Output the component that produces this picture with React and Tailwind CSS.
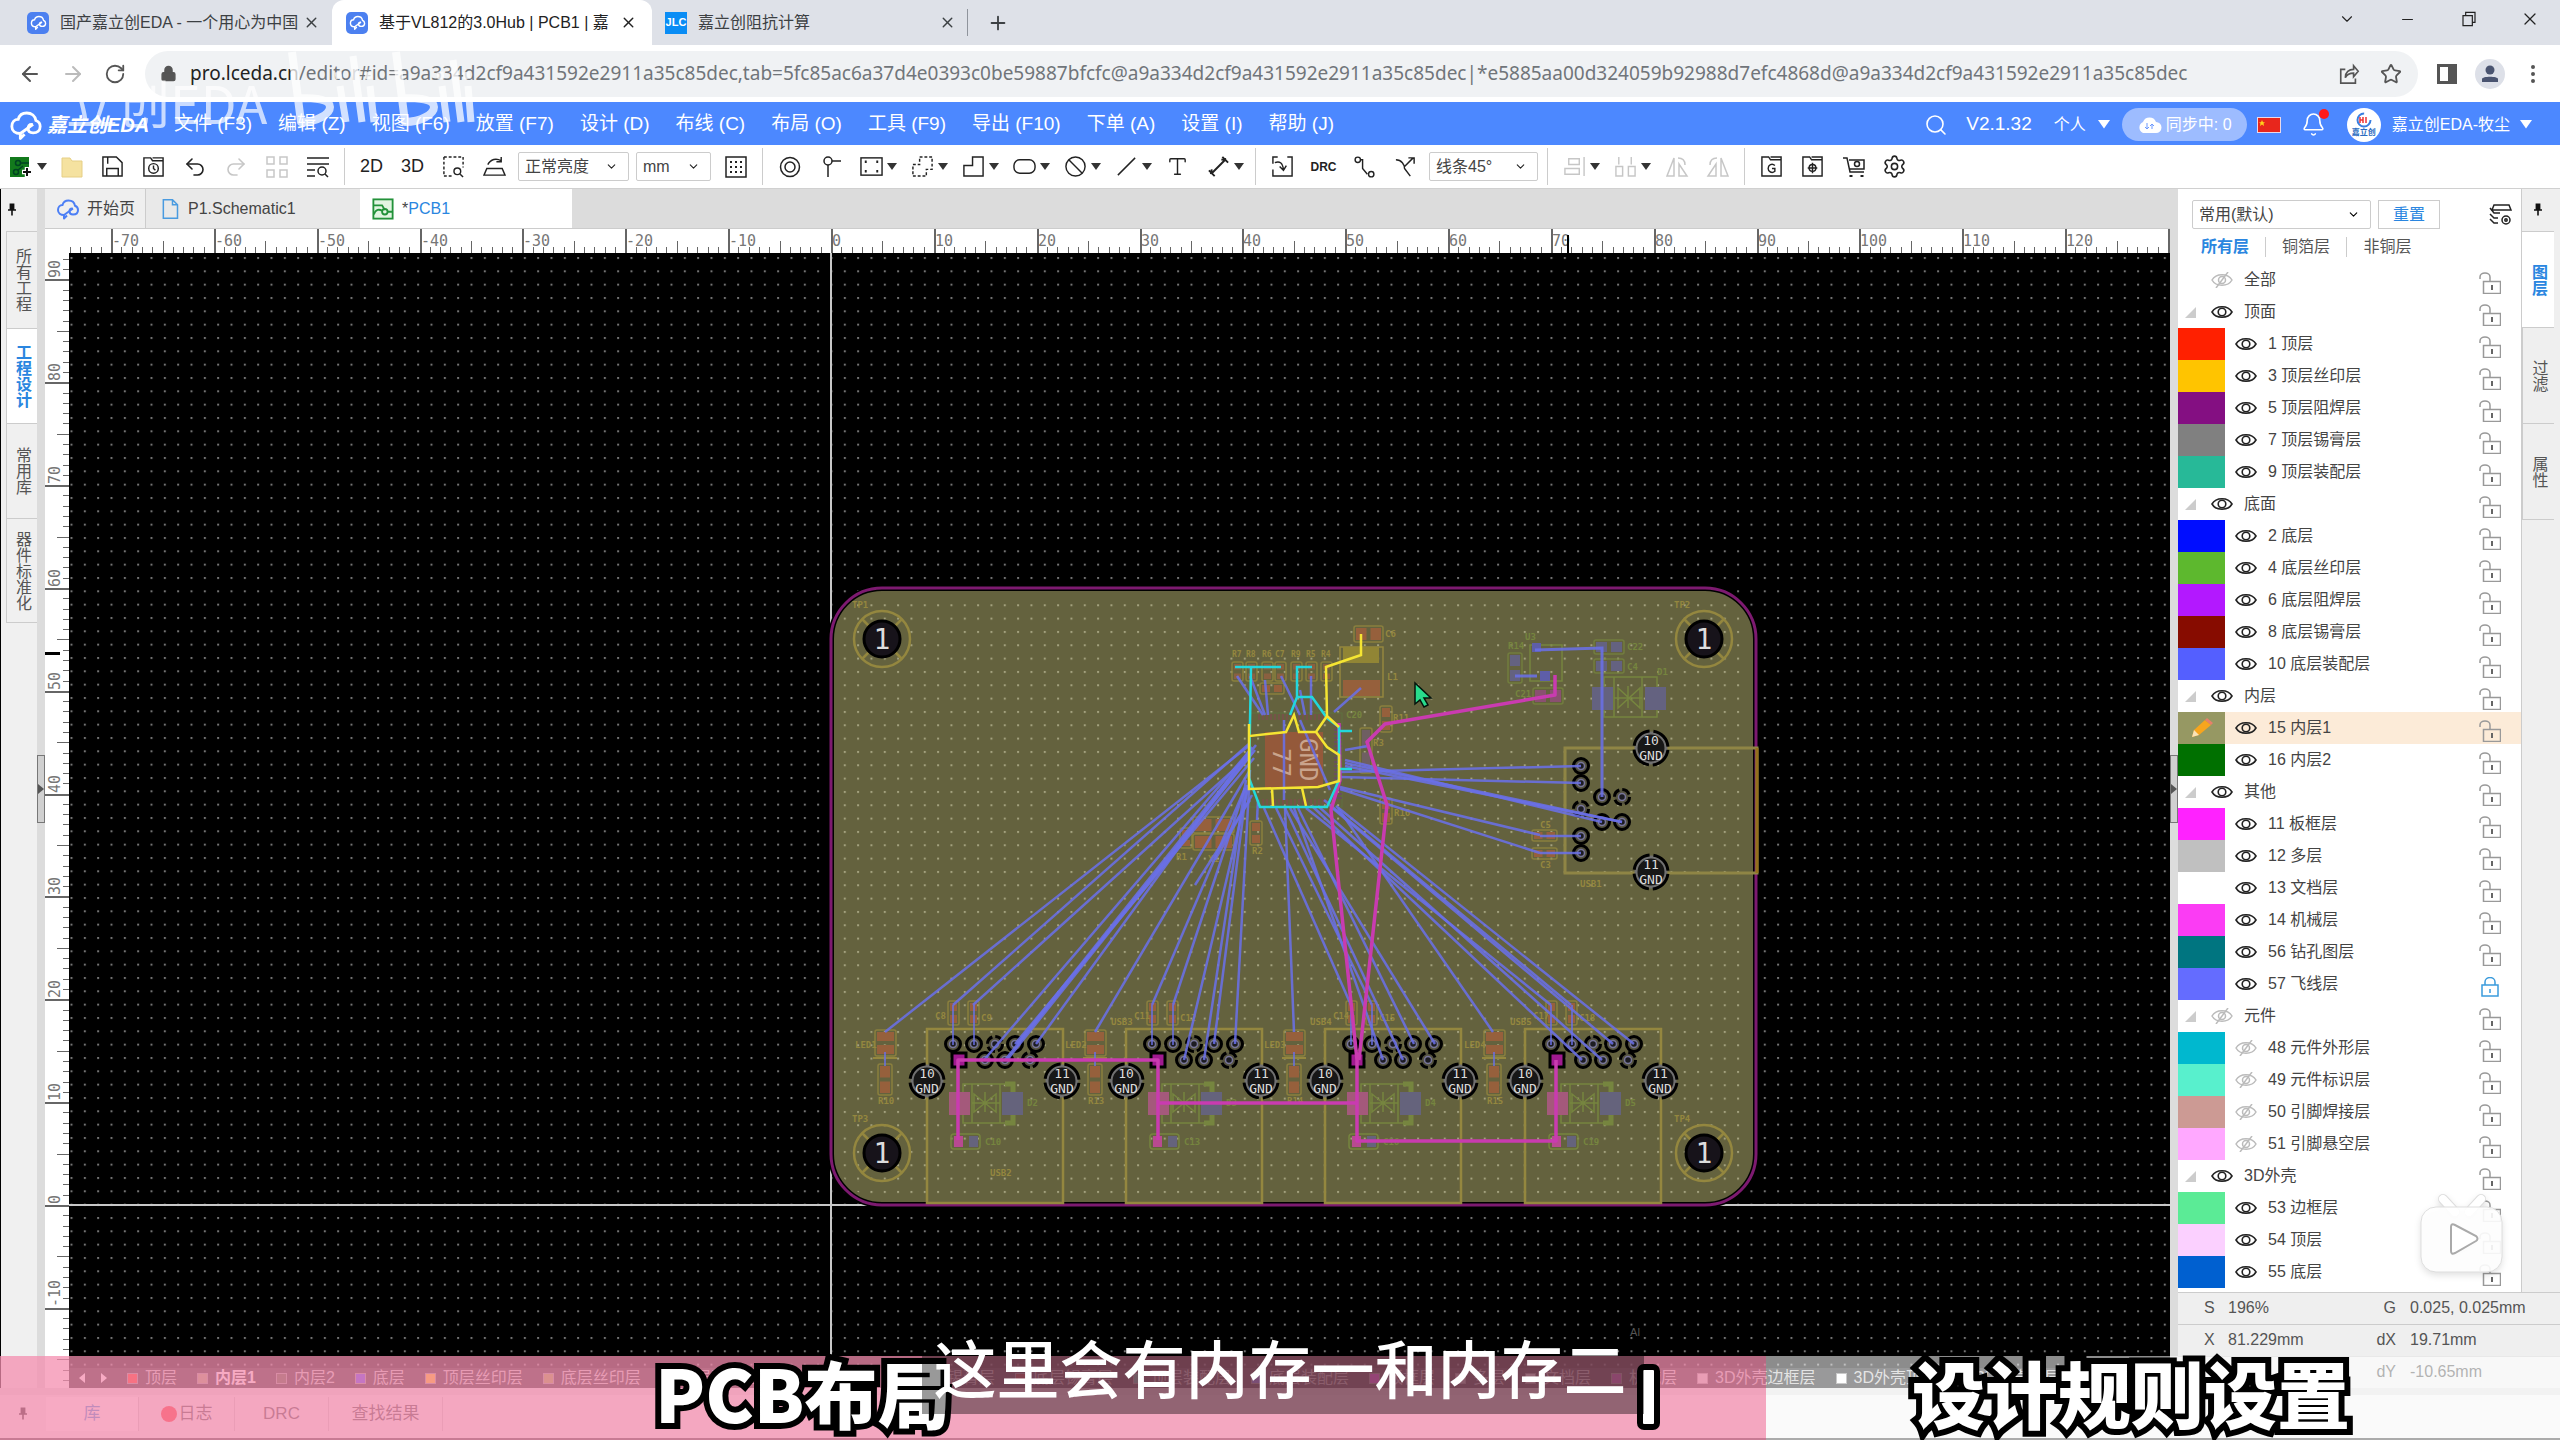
import React from "react";
import {
  ArrowLeft, ArrowRight, RotateCw, Lock, X, Plus, ChevronDown, Minus, Star,
  MoreVertical, Search, Bell, Undo2, Redo2, Settings, Type,
} from "lucide-react";

const CJK = "font-['Liberation_Sans','Noto_Sans_CJK_SC',sans-serif]";

function Ic({ children, size = 24, sw = 1.5, color = "#222", vb = "0 0 24 24" }) {
  return (
    <svg width={size} height={size} viewBox={vb} fill="none" stroke={color} strokeWidth={sw} className="shrink-0">
      {children}
    </svg>
  );
}

function CloudLogo({ size = 24, color = "#4c7ff5", sw = 2.4 }) {
  return (
    <Ic size={size} color={color} sw={sw}>
      <path d="M8 18c-3.500 0-6-2-6-5s2-5 4.500-5C7.300 5 9.500 3.500 12.500 3.500c3.500 0 6 2.300 6.500 5.300 2 .8 3 2.400 3 4.200 0 2.800-2 4.500-5 4.500-2 0-3.500-1-3.500-3s1-3 2.500-3" strokeLinecap="round" />
      <path d="M17 11.500 8 18v3.500l3-3" strokeLinejoin="round" />
    </Ic>
  );
}

/* ---------- browser chrome ---------- */

function Favicon() {
  return (
    <span className="flex h-[22px] w-[22px] shrink-0 items-center justify-center rounded-[5px] bg-[#4c80f0]">
      <CloudLogo size={17} color="#fff" sw={2} />
    </span>
  );
}

function BrowserTabs() {
  return (
    <div className={`flex h-[45px] shrink-0 items-stretch bg-[#dee1e8] text-[16px] text-[#3c4043] ${CJK}`}>
      <div className="flex w-[332px] items-center gap-[5px] pl-[27px]">
        <Favicon />
        <span className="ml-[6px] w-[238px] whitespace-nowrap">国产嘉立创EDA - 一个用心为中国</span>
        <button aria-label="关闭标签页"><X size={17} /></button>
      </div>
      <div className="flex w-[320px] items-center gap-[5px] rounded-t-[12px] bg-white pl-[14px] text-[#222]">
        <Favicon />
        <span className="ml-[6px] w-[236px] whitespace-nowrap">基于VL812的3.0Hub | PCB1 | 嘉</span>
        <button aria-label="关闭标签页"><X size={17} /></button>
      </div>
      <div className="my-[9px] flex w-[316px] items-center gap-[5px] border-r border-[#8f949c] pl-[13px]">
        <span className="flex h-[22px] w-[22px] shrink-0 items-center justify-center bg-[#0a8df5] text-[11px] font-bold text-white">JLC</span>
        <span className="ml-[6px] w-[236px] whitespace-nowrap">嘉立创阻抗计算</span>
        <button aria-label="关闭标签页"><X size={17} /></button>
      </div>
      <button aria-label="新标签页" className="px-[19px]"><Plus size={22} /></button>
      <div className="ml-auto flex items-center pb-[7px] text-[#222]">
        <button aria-label="展开" className="flex w-[61px] justify-center"><ChevronDown size={18} strokeWidth={1.5} /></button>
        <button aria-label="最小化" className="flex w-[61px] justify-center"><Minus size={17} strokeWidth={1.5} /></button>
        <button aria-label="还原" className="flex w-[61px] justify-center">
          <Ic size={16} sw={1.8}><path d="M3 7h14v15H3zM7 7V2h14v15h-4" /></Ic>
        </button>
        <button aria-label="关闭" className="flex w-[61px] justify-center"><X size={20} strokeWidth={1.5} /></button>
      </div>
    </div>
  );
}

function AddressBar() {
  return (
    <div className="flex h-[57px] shrink-0 items-center bg-white text-[#555]">
      <button aria-label="后退" className="ml-[18px]"><ArrowLeft size={24} /></button>
      <button aria-label="前进" className="ml-[19px] text-[#bbb]"><ArrowRight size={24} /></button>
      <button aria-label="刷新" className="ml-[19px]"><RotateCw size={22} /></button>
      <div className="ml-[19px] flex h-[46px] flex-1 items-center rounded-full bg-[#f0f2f4] pl-[15px] pr-[16px]">
        <Lock size={17} fill="#555" className="shrink-0" />
        <span className="ml-[13px] flex-1 whitespace-nowrap font-['Noto_Sans',sans-serif] text-[19px] text-[#70757a]">
          <span className="text-[#222]">pro.lceda.cn</span>/editor#id=a9a334d2cf9a431592e2911a35c85dec,tab=5fc85ac6a37d4e0393c0be59887bfcfc@a9a334d2cf9a431592e2911a35c85dec|*e5885aa00d324059b92988d7efc4868d@a9a334d2cf9a431592e2911a35c85dec
        </span>
        <button aria-label="分享">
          <Ic size={22} color="#555" sw={1.8}><path d="M8 7H3v15h16v-5M8 16c0-6 4-9 9-9V3l5 6-5 6v-4c-4 0-7 1-9 5z" /></Ic>
        </button>
        <button aria-label="收藏" className="ml-[20px]"><Star size={22} /></button>
      </div>
      <button aria-label="侧边栏" className="ml-[19px] h-[20px] w-[20px] border-[3px] border-r-[9px] border-[#555]" />
      <span className="ml-[18px] flex h-[30px] w-[30px] items-center justify-center rounded-full bg-[#dde0e8]">
        <svg width="18" height="18" viewBox="0 0 18 18" fill="#4a5470"><circle cx="9" cy="5" r="4.500" /><path d="M1 17v-3c0-3 16-3 16 0v3z" /></svg>
      </span>
      <button aria-label="菜单" className="ml-[16px] mr-[15px]"><MoreVertical size={24} /></button>
    </div>
  );
}

/* ---------- application header ---------- */

const MENUS = ["文件 (F3)", "编辑 (Z)", "视图 (F6)", "放置 (F7)", "设计 (D)", "布线 (C)", "布局 (O)", "工具 (F9)", "导出 (F10)", "下单 (A)", "设置 (I)", "帮助 (J)"];

function Caret({ color = "#333", w = 10 }) {
  return <svg width={w} height={w * 0.7} viewBox="0 0 10 7" className="shrink-0"><path d="M0 0h10L5 7z" fill={color} /></svg>;
}

function MenuBar() {
  return (
    <div className={`flex h-[43px] shrink-0 items-center bg-[#4c88ff] pt-[2px] text-white ${CJK}`}>
      <span className="ml-[9px]"><CloudLogo size={34} color="#fff" sw={2} /></span>
      <span className="ml-[4px] w-[110px] whitespace-nowrap text-[20px] font-bold italic">嘉立创EDA</span>
      <nav className="ml-[17px] flex gap-[26px] text-[19px]">
        {MENUS.map((m) => <button key={m} className="whitespace-nowrap">{m}</button>)}
      </nav>
      <div className="ml-auto flex items-center text-[16px]">
        <button aria-label="搜索"><Search size={24} strokeWidth={1.6} /></button>
        <span className="ml-[18px] text-[19px]">V2.1.32</span>
        <button className="ml-[22px] flex items-center gap-[12px]">个人 <Caret color="#fff" w={12} /></button>
        <span className="ml-[12px] flex h-[33px] w-[125px] items-center gap-[4px] whitespace-nowrap rounded-full bg-[#9dbcff] pl-[15px] text-[16px]">
          <svg width="25" height="20" viewBox="0 0 25 20"><path d="M6 18a6 6 0 0 1 0-11 7 7 0 0 1 13 0 5.500 5.500 0 0 1 0 11z" fill="#fff" /><path d="M10 8v6m-2-2 2 2 2-2M15 14V9m-2 2 2-2 2 2" stroke="#6b98ff" fill="none" /></svg>
          同步中: 0
        </span>
        <svg className="ml-[10px]" width="24" height="16" viewBox="0 0 24 16"><rect width="24" height="16" fill="#e8261c" stroke="#e9d9e9" strokeWidth="2" /><path d="m5 3 1 2.200h2L6.500 6.500 7 9 5 7.500 3 9l.5-2.500L2 5.200h2z" fill="#ffd21c" /></svg>
        <span className="relative ml-[20px]">
          <Bell size={25} strokeWidth={1.5} />
          <span className="absolute -top-[3px] right-[-3px] h-[10px] w-[10px] rounded-full bg-[#ff1a1a]" />
        </span>
        <span className="ml-[21px] flex h-[34px] w-[34px] flex-col items-center justify-center rounded-full bg-white">
          <svg width="22" height="16" viewBox="0 0 22 16" fill="none" strokeWidth="2"><circle cx="11" cy="8" r="6.500" stroke="#3a7fe0" strokeDasharray="30 11" /><path d="M7 5v6M10 5v6M7 8h3M13 5v6" stroke="#e33" strokeWidth="1.500" /></svg>
          <span className="text-[8px] font-bold leading-[9px] text-[#2b6cc0]">嘉立创</span>
        </span>
        <button className="ml-[11px] mr-[28px] flex items-center gap-[10px] whitespace-nowrap">嘉立创EDA-牧尘 <Caret color="#fff" w={12} /></button>
      </div>
    </div>
  );
}

/* ---------- toolbar ---------- */

function Tool({ label, children, dim }) {
  return <button aria-label={label} className={dim ? "flex w-[41px] justify-center opacity-25" : "flex w-[41px] justify-center"}>{children}</button>;
}
function ToolDrop({ label, children, dim }) {
  return (
    <button aria-label={label} className="flex w-[51px] items-center gap-[4px] pl-[9px]">
      <span className={dim ? "opacity-25" : ""}>{children}</span>
      <Caret />
    </button>
  );
}
const Sep = () => <span className="mx-[6px] h-[37px] w-px bg-[#ccc]" />;

function Pick({ label, value, className }) {
  return (
    <label className={`relative flex h-[29px] items-center rounded-[2px] border border-[#ccc] bg-white ${className}`}>
      <select aria-label={label} defaultValue={value} className="h-full w-full appearance-none bg-transparent pl-[6px] text-[16px] text-[#444] outline-none">
        <option>{value}</option>
      </select>
      <ChevronDown size={13} className="pointer-events-none absolute right-[10px]" />
    </label>
  );
}

function Toolbar() {
  return (
    <div className={`flex h-[44px] shrink-0 items-center border-b border-[#d0d0d0] bg-white text-[#222] ${CJK}`}>
      <ToolDrop label="新建">
        <svg width="24" height="22" viewBox="0 0 24 22"><rect x="1" y="1" width="19" height="20" fill="#127a1c" /><circle cx="9" cy="7" r="2.500" fill="none" stroke="#042" strokeWidth="1.500" /><circle cx="7" cy="16" r="2.500" fill="none" stroke="#042" strokeWidth="1.500" /><path d="M11 7h9M9 14l5-4" stroke="#042" strokeWidth="1.500" /><path d="M13 16h10M18 11v10" stroke="#fff" strokeWidth="4.500" /><path d="M14 16h8M18 12v8" stroke="#111" strokeWidth="2" /></svg>
      </ToolDrop>
      <Tool label="打开"><svg width="22" height="22" viewBox="0 0 22 22"><path d="M1 2h8l2 3h10v16H1z" fill="#f5e2a0" stroke="#e6cf85" /></svg></Tool>
      <Tool label="保存"><Ic size={23}><path d="M2 2h14l6 6v14H2zM6 22v-8h12v8M7 2v7" /></Ic></Tool>
      <Tool label="历史"><Ic size={23}><path d="M2 3h7l2 3h11v16H2zM11 3h11v3" /><circle cx="12" cy="14" r="5" /><path d="M12 11v3l2 2" /></Ic></Tool>
      <Tool label="撤销"><Undo2 size={24} strokeWidth={1.6} /></Tool>
      <Tool label="重做" dim><Redo2 size={24} strokeWidth={1.6} /></Tool>
      <Tool label="布局" dim><Ic size={24}><path d="M2 2h7v7H2zM15 2h7v7h-7zM2 15h7v7H2zM15 15h7v7h-7z" /></Ic></Tool>
      <Tool label="查找"><Ic size={24}><path d="M1 3h22M1 9h22M1 15h8M1 21h8" /><circle cx="16" cy="16" r="4" /><path d="m19 19 3 3" /></Ic></Tool>
      <Sep />
      <Tool label="2D"><span className="text-[18px]">2D</span></Tool>
      <Tool label="3D"><span className="text-[18px]">3D</span></Tool>
      <Tool label="区域查找"><Ic size={23}><path d="M2 2h20v11M2 2v20h9" strokeDasharray="3 2" /><circle cx="16" cy="17" r="3.500" /><path d="m19 20 3 3" /></Ic></Tool>
      <Tool label="翻转"><Ic size={23}><path d="M4 14h16l3 7H1zM5 10c3-6 9-7 14-4M19 2v5h-5" /></Ic></Tool>
      <Pick label="亮度" value="正常亮度" className="ml-[3px] w-[111px]" />
      <Pick label="单位" value="mm" className="ml-[7px] mr-[4px] w-[75px]" />
      <Tool label="网格"><Ic size={24}><rect x="2" y="2" width="20" height="20" /><path d="M6 7h13M6 12h13M6 17h13" strokeDasharray="2 3" strokeWidth="2" /></Ic></Tool>
      <Sep />
      <Tool label="焊盘"><Ic size={24}><circle cx="12" cy="12" r="9.500" /><circle cx="12" cy="12" r="5" /></Ic></Tool>
      <Tool label="过孔"><Ic size={24}><circle cx="9" cy="6" r="4" /><path d="M13 6h9M9 10v12" /></Ic></Tool>
      <ToolDrop label="器件"><Ic size={23}><rect x="1" y="3" width="22" height="18" /><path d="M5 7h2M17 7h2M5 17h2M17 17h2" strokeWidth="2.500" /></Ic></ToolDrop>
      <ToolDrop label="选区"><Ic size={23}><path d="M9 2h13v13h-6v7H2V10h7z" strokeDasharray="3 2" /></Ic></ToolDrop>
      <ToolDrop label="铺铜"><Ic size={23}><path d="M11 2h11v20H2V11h9z" /></Ic></ToolDrop>
      <ToolDrop label="挖槽"><Ic size={23}><rect x="1" y="5" width="22" height="14" rx="6" /></Ic></ToolDrop>
      <ToolDrop label="禁止区"><Ic size={23}><circle cx="12" cy="12" r="10" /><path d="m5 5 14 14" /></Ic></ToolDrop>
      <ToolDrop label="线条"><Ic size={23}><path d="M3 21 21 3" /></Ic></ToolDrop>
      <Tool label="文本"><Type size={23} strokeWidth={1.5} /></Tool>
      <ToolDrop label="尺寸"><Ic size={23}><path d="M5 19 19 5M2 16l6 6M16 2l6 6M4 20l1-5M20 4l-5 1" strokeWidth="2" /></Ic></ToolDrop>
      <Sep />
      <Tool label="导入"><Ic size={23}><path d="M2 9V2h5M17 2h5v20H2v-7M4 8c5-2 8 0 9 7M9 12l4 4 3-5" /></Ic></Tool>
      <Tool label="DRC"><span className="text-[12px] font-bold">DRC</span></Tool>
      <Tool label="布线"><Ic size={23}><circle cx="5" cy="5" r="2.800" /><circle cx="19" cy="20" r="2.800" /><path d="M8 5h2v9l5 6" /></Ic></Tool>
      <Tool label="推挤"><Ic size={23}><path d="M2 5c6 0 9 5 9 9l6 8M11 12l9-9M15 3h6v6" /></Ic></Tool>
      <Pick label="线条角度" value="线条45°" className="mx-[3px] w-[109px]" />
      <Sep />
      <ToolDrop label="对齐" dim><Ic size={23}><path d="M22 2v20M6 4h11v6H6zM2 14h15v6H2z" /></Ic></ToolDrop>
      <ToolDrop label="分布" dim><Ic size={23}><path d="M2 12h7v10H2zM15 12h7v10h-7zM5 2v8M18 2v8" /></Ic></ToolDrop>
      <Tool label="水平翻转" dim><Ic size={24}><path d="M9 3v18H2zM14 21h8l-8-12zM13 3c5 0 7 3 7 7" /></Ic></Tool>
      <Tool label="垂直翻转" dim><Ic size={24}><path d="M15 3v18h7zM10 21H2l8-12zM11 3C6 3 4 6 4 10" /></Ic></Tool>
      <Sep />
      <Tool label="Gerber"><Ic size={23}><path d="M2 2h7l2 3h11v17H2zM11 2h11v3" /><path d="M15.500 11c-3-3-7-.5-7 3s4 5.500 7 3v-3h-3" /></Ic></Tool>
      <Tool label="坐标文件"><Ic size={23}><path d="M2 2h7l2 3h11v17H2zM11 2h11v3" /><circle cx="12" cy="13.500" r="3.500" /><path d="M12 8v11M7 13.500h10" /></Ic></Tool>
      <Tool label="下单"><Ic size={24}><path d="M1 3h4l3 14h14M7 5h15v9H8" /><circle cx="15" cy="9" r="2.500" /><path d="M9 20v2M20 20v2" strokeWidth="3" /></Ic></Tool>
      <Tool label="设置"><Settings size={25} strokeWidth={1.5} /></Tool>
    </div>
  );
}

/* ---------- side docks ---------- */

function Pin() {
  return <svg width="8" height="14" viewBox="0 0 10 16" className="shrink-0"><path d="M2 0h6v7h2v2H0V7h2zM4 9h2v6H4z" fill="#111" /></svg>;
}

function VGutter({ arrow }) {
  return (
    <div className="flex w-[8px] shrink-0 items-center justify-center bg-[#dcdcdc]">
      <span className="flex h-[68px] w-[8px] items-center border border-[#777] bg-[#d0d0d0]">
        <svg width="6" height="10" viewBox="0 0 6 10"><path d={arrow} fill="#555" /></svg>
      </span>
    </div>
  );
}

const LEFT = [["所有工程", "h-[98px]"], ["工程设计", "h-[95px]"], ["常用库", "h-[95px]"], ["器件标准化", "h-[104px]"]];

function LeftDock() {
  return (
    <div className={`flex w-[37px] shrink-0 flex-col border-l border-black bg-[#f0f0f0] ${CJK}`}>
      <button aria-label="固定" className="flex h-[42px] items-center justify-center pr-[14px]"><Pin /></button>
      {LEFT.map(([t, h], i) => (
        <button
          key={t}
          className={`ml-[5px] flex items-center justify-center border-b border-l border-[#ccc] text-[16px] leading-[16px] [writing-mode:vertical-rl] ${h} ${i === 1 ? "bg-white font-bold text-[#2a86e0]" : "text-[#555]"} ${i === 0 ? "border-t" : ""}`}
        >
          {t}
        </button>
      ))}
    </div>
  );
}

const GROUPS = [
  ["全部", false, null, []],
  ["顶面", true, 1, [["1 顶层", "#ff2000"], ["3 顶层丝印层", "#ffc400"], ["5 顶层阻焊层", "#840f82"], ["7 顶层锡膏层", "#808080"], ["9 顶层装配层", "#27b998"]]],
  ["底面", true, 1, [["2 底层", "#000dff"], ["4 底层丝印层", "#5db82e"], ["6 底层阻焊层", "#b318ff"], ["8 底层锡膏层", "#870c00"], ["10 底层装配层", "#545fff"]]],
  ["内层", true, 1, [["15 内层1", "#969863"], ["16 内层2", "#007000"]]],
  ["其他", true, 1, [["11 板框层", "#ff22ff"], ["12 多层", "#c0c0c0"], ["13 文档层", "#ffffff"], ["14 机械层", "#fb3cf4"], ["56 钻孔图层", "#007580"], ["57 飞线层", "#646cff"]]],
  ["元件", false, 1, [["48 元件外形层", "#00b8cf"], ["49 元件标识层", "#58f0cd"], ["50 引脚焊接层", "#cc9a94"], ["51 引脚悬空层", "#ffa8ff"]]],
  ["3D外壳", true, 1, [["53 边框层", "#5beb96"], ["54 顶层", "#fbd0ff"], ["55 底层", "#0060d0"]]],
];

function Eye({ on }) {
  return on ? (
    <svg width="22" height="16" viewBox="0 0 22 16" fill="none" stroke="#222" strokeWidth="1.600"><path d="M1 8C5 1 17 1 21 8c-4 7-16 7-20 0z" /><circle cx="11" cy="8" r="3.800" /></svg>
  ) : (
    <svg width="22" height="16" viewBox="0 0 22 16" fill="none" stroke="#bbb" strokeWidth="1.500"><path d="M1 8C5 1 17 1 21 8c-4 7-16 7-20 0z" /><circle cx="11" cy="8" r="3.500" /><path d="M17 0 5 16" /></svg>
  );
}

function LockIcon({ locked }) {
  return locked ? (
    <svg width="18" height="20" viewBox="0 0 18 20" fill="none" stroke="#3a9bdc" strokeWidth="1.500"><rect x="1" y="8" width="16" height="11" /><path d="M4 8V5a5 4.500 0 0 1 10 0v3M9 12v4" /></svg>
  ) : (
    <svg width="22" height="22" viewBox="0 0 22 22" fill="none" stroke="#999" strokeWidth="1.500"><rect x="4.500" y="9.500" width="17" height="12" /><path d="M1 7V5a5 4 0 0 1 10 0v4" /><path d="M13 13v5" stroke="#666" strokeWidth="2" /></svg>
  );
}

function LockCell({ locked }) {
  return <button aria-label="锁定" className="ml-auto mr-[20px] flex w-[22px] justify-center pt-[5px]"><LockIcon locked={locked} /></button>;
}

function LayerPanel() {
  return (
    <div className="flex min-w-0 flex-1 flex-col border-r border-[#ccc] bg-white">
      <div className="flex h-[45px] items-end pl-[14px]">
        <Pick label="预设" value="常用(默认)" className="mb-[5px] w-[179px]" />
        <button className="mb-[5px] ml-[7px] h-[29px] w-[62px] border border-[#ccc] text-[16px] text-[#2a86e0]">重置</button>
        <button aria-label="图层管理" className="mb-[7px] ml-auto mr-[9px]">
          <Ic size={24}><path d="M6 2h15l2 5H4zM2 5l4 5h6M2 11l4 4h4M2 16l4 4h4" /><circle cx="18" cy="17" r="4" /><circle cx="18" cy="17" r="1.200" /></Ic>
        </button>
      </div>
      <div className="mb-[4px] flex h-[26px] items-center pl-[7px] text-[16px] text-[#555]">
        <button className="w-[81px] border-r border-[#ccc] font-bold leading-[20px] text-[#2a86e0]">所有层</button>
        <button className="w-[81px] border-r border-[#ccc] leading-[20px]">铜箔层</button>
        <button className="w-[81px] leading-[20px]">非铜层</button>
      </div>
      <ul className="text-[16px] text-[#444]">
        {GROUPS.map(([name, on, tri, kids]) => (
          <React.Fragment key={name}>
            <li className="flex h-[32px] items-center">
              <span className="ml-[7px] w-[11px]">{tri && <svg width="11" height="11" viewBox="0 0 11 11"><path d="M11 0v11H0z" fill="#ccc" /></svg>}</span>
              <button aria-label="显示" className="ml-[15px]"><Eye on={on} /></button>
              <span className="ml-[11px]">{name}</span>
              <LockCell />
            </li>
            {kids.map(([k, c]) => (
              <li key={k} className={`flex h-[32px] items-center ${k === "15 内层1" ? "bg-[#fcebd8]" : ""}`}>
                <span className="flex h-full w-[47px] items-center justify-center" style={{ background: c }}>
                  {k === "15 内层1" && (
                    <svg width="22" height="20" viewBox="0 0 22 20"><path d="m1 19 2-7L14 2l6 5L8 17z" fill="#f7a51e" /><path d="m14 2 2-2 6 5-2 2z" fill="#e8806a" /><path d="m1 19 2-7 5 5z" fill="#fbe3b8" /></svg>
                  )}
                </span>
                <button aria-label="显示" className="ml-[10px]"><Eye on={on} /></button>
                <span className="ml-[11px]">{k}</span>
                <LockCell locked={k === "57 飞线层"} />
              </li>
            ))}
          </React.Fragment>
        ))}
      </ul>
    </div>
  );
}

function StatusRow({ a, b, c, d }) {
  return (
    <div className="flex h-[32px] items-center border-t border-[#ccc] pb-[2px] text-[16px] text-[#555]">
      <span className="w-[50px] pl-[26px]">{a}</span>
      <span className="w-[139px]">{b}</span>
      <span className="w-[29px] text-right">{c}</span>
      <span className="pl-[14px]">{d}</span>
    </div>
  );
}

function RightDock() {
  return (
    <div className={`flex w-[382px] shrink-0 flex-col bg-[#efefef] ${CJK}`}>
      <div className="flex min-h-0 flex-1">
        <LayerPanel />
        <div className="flex w-[38px] flex-col pr-[6px]">
          <button aria-label="固定" className="flex h-[43px] items-center justify-center border-b border-[#ccc]"><Pin /></button>
          {["图层", "过滤", "属性"].map((t, i) => (
            <button
              key={t}
              className={`flex h-[96px] items-center justify-center border-b border-l border-[#ccc] text-[16px] leading-[16px] [writing-mode:vertical-rl] ${i === 0 ? "-ml-px bg-white font-bold text-[#2a86e0]" : "text-[#555]"}`}
            >
              {t}
            </button>
          ))}
        </div>
      </div>
      <StatusRow a="S" b="196%" c="G" d="0.025, 0.025mm" />
      <StatusRow a="X" b="81.229mm" c="dX" d="19.71mm" />
      <StatusRow a="" b="" c="dY" d="-10.65mm" />
    </div>
  );
}

/* ---------- rulers ---------- */

const MM = 10.284;

function TopRuler() {
  const ticks = [];
  for (let i = -74; i <= 130; i++) {
    const x = Math.round(786 + i * MM);
    const h = i % 10 === 0 ? 24 : i % 5 === 0 ? 12 : 6;
    ticks.push(<rect key={i} x={x} y={24 - h} width={i % 10 === 0 ? 2 : 1} height={h} fill="#666" />);
    if (i % 10 === 0 && i < 130) ticks.push(<text key={`t${i}`} x={x + 1} y={17} fontSize="15" fill="#777">{i}</text>);
  }
  return (
    <svg className="block h-[24px] w-full bg-white font-['DejaVu_Sans_Mono',monospace]">
      {ticks}
      <rect x="1522" y="6" width="2" height="18" fill="#000" />
    </svg>
  );
}

function LeftRuler() {
  const ticks = [];
  for (let i = -17; i <= 92; i++) {
    const y = Math.round(952 - i * MM);
    const w = i % 10 === 0 ? 24 : i % 5 === 0 ? 12 : 6;
    ticks.push(<rect key={i} x={24 - w} y={y} width={w} height={i % 10 === 0 ? 2 : 1} fill="#666" />);
    if (i % 10 === 0) ticks.push(<text key={`t${i}`} transform={`translate(15 ${y - 1}) rotate(-90)`} fontSize="15" fill="#777">{i}</text>);
  }
  return (
    <svg className="block h-full w-[24px] shrink-0 bg-white font-['DejaVu_Sans_Mono',monospace]">
      {ticks}
      <rect x="0" y="399" width="15" height="3" fill="#000" />
    </svg>
  );
}

/* ---------- PCB canvas ---------- */

const GOLD = "#94873f";
const LEAF = "#76853f";
const RAT = "#6a70e6";
const MAG = "#c93bb0";
const ORANGE = "#96603c";

function Hole({ x, y, label }) {
  return (
    <g>
      <circle cx={x} cy={y} r="28" fill="none" stroke={GOLD} strokeWidth="2.500" />
      <path d={`M${x - 20} ${y - 20}l8 8M${x + 20} ${y - 20}l-8 8M${x - 20} ${y + 20}l8-8M${x + 20} ${y + 20}l-8-8`} stroke={GOLD} strokeWidth="2.500" />
      <circle cx={x} cy={y} r="18" fill="#17131a" stroke="#000" strokeWidth="3" />
      <text x={x} y={y + 10} fontSize="28" textAnchor="middle" fill="#ddd">1</text>
      <text x={x - 30} y={y - 31} fontSize="9" fontWeight="bold" fill={GOLD}>{label}</text>
    </g>
  );
}

function Gnd({ x, y, n }) {
  return (
    <g fontWeight="normal" fontSize="13" textAnchor="middle">
      <circle cx={x} cy={y} r="15" fill="#171717" stroke="#707070" strokeWidth="3" />
      <circle cx={x} cy={y} r="17" fill="none" stroke="#000" strokeWidth="3" strokeDasharray="22.700 4" strokeDashoffset="-2" />
      <text x={x} y={y - 3} fill="#ddd">{n}</text>
      <text x={x} y={y + 12} fill="#ddd">GND</text>
    </g>
  );
}

function Pad({ x, y, dashed }) {
  return (
    <g>
      <circle cx={x} cy={y} r="7.500" fill="#54523f" stroke="#000" strokeWidth="3" strokeDasharray={dashed ? "8.800 3" : undefined} />
      <circle cx={x} cy={y} r="3.500" fill="#1c1c22" stroke="#77759a" strokeWidth="1.500" />
    </g>
  );
}

function Chip({ x, y, w, h, c = ORANGE, o = GOLD, v }) {
  const a = v
    ? [[x + 2, y + 2, w - 4, h / 2 - 4], [x + 2, y + h / 2 + 2, w - 4, h / 2 - 4]]
    : [[x + 2, y + 2, w / 2 - 4, h - 4], [x + w / 2 + 2, y + 2, w / 2 - 4, h - 4]];
  return (
    <g>
      <rect x={x} y={y} width={w} height={h} rx="2" fill="none" stroke={o} strokeWidth="1.500" strokeOpacity=".8" />
      {a.map((r, i) => <rect key={i} x={r[0]} y={r[1]} width={r[2]} height={r[3]} fill={c} />)}
    </g>
  );
}

function Usb({ x, first, name, led, pads }) {
  const l = first ? -42 : -31;
  return (
    <g>
      <rect x={x} y="1029" width="136" height="174" fill="none" stroke={GOLD} strokeWidth="2.500" />
      <Chip x={x + 21} y={1001} w={11} h={24} v />
      <Chip x={x + 41} y={1001} w={11} h={24} v />
      <text x={x + 8} y={1019} fill={GOLD}>{pads[0]}</text>
      <text x={x + 54} y={1021} fill={GOLD}>{pads[1]}</text>
      <Chip x={x + l - 10} y={1030} w={21} h={26} v />
      <path d={`M${x + l - 12} 1058h24`} stroke={GOLD} strokeWidth="2" />
      <Chip x={x + l - 7} y={1064} w={14} h={31} v />
      <text x={x + l - 30} y={1048} fill={GOLD}>{led}</text>
      <text x={x + l - 7} y={1104} fill={GOLD}>{pads[2]}</text>
      <path d={`M${x + l} 1052v14`} stroke={RAT} strokeWidth="1.500" />
      <rect x={x + 36} y="1084" width="50" height="39" fill="none" stroke={LEAF} strokeWidth="1.500" />
      <path d={`M${x + 45} 1084v39M${x + 73} 1084v39M${x + 47} 1094v18l22-18v18zM${x + 45} 1103h28M${x + 58} 1092v20`} fill="none" stroke={LEAF} strokeWidth="1.500" />
      <path d={`M${x + 78} 1084h8v10M${x + 78} 1123h8v-8`} stroke={LEAF} strokeWidth="5" fill="none" />
      <rect x={x + 22} y="1092" width="21" height="23" fill="#a4597b" />
      <rect x={x + 75} y="1092" width="21" height="23" fill="#65637c" />
      <rect x={x + 24} y="1134" width="29" height="15" rx="3" fill="none" stroke={LEAF} strokeWidth="1.500" />
      <rect x={x + 27} y="1136" width="9" height="11" fill="#b84a90" />
      <rect x={x + 42} y="1136" width="9" height="11" fill="#65637c" />
      <text x={x + 100} y={1106} fill={LEAF}>{pads[3]}</text>
      <text x={x + 58} y={1145} fill={LEAF}>{pads[4]}</text>
      <text x={first ? x + 63 : x - 15} y={first ? 1176 : 1025} fill={GOLD}>{name}</text>
      {[26, 47, 68, 88, 109].map((d, i) => <Pad key={d} x={x + d} y={1044} dashed={i === 2} />)}
      {[58, 78, 103].map((d, i) => <Pad key={d} x={x + d} y={1060} dashed={i === 2} />)}
      <path d={`M${x + 26} 1005v40M${x + 47} 1005v40`} stroke={RAT} strokeWidth="1.500" />
      <rect x={x + 25} y="1053" width="14" height="14" fill="#a01a90" stroke="#000" strokeWidth="3" />
      <Gnd x={x} y={1081} n="10" />
      <Gnd x={x + 135} y={1081} n="11" />
    </g>
  );
}

const RATS = [
  [1250, 745, 885, 1032], [1250, 743, 953, 1005], [1250, 755, 973, 1005], [1252, 748, 984, 1060], [1253, 752, 1005, 1060],
  [1255, 750, 1007, 1060], [1254, 758, 1015, 1044], [1256, 745, 1017, 1044], [1252, 747, 1036, 1044], [1250, 770, 1095, 1032],
  [1245, 788, 1152, 1005], [1245, 788, 1173, 1005], [1250, 780, 1184, 1060], [1246, 780, 1204, 1060], [1247, 785, 1214, 1044],
  [1250, 770, 1235, 1044], [1285, 808, 1294, 1032], [1264, 808, 1351, 1005], [1276, 808, 1372, 1005], [1294, 808, 1383, 1060],
  [1285, 808, 1403, 1060], [1298, 808, 1414, 1044], [1290, 808, 1435, 1044], [1338, 808, 1493, 1032], [1306, 808, 1551, 1005],
  [1312, 806, 1582, 1060], [1318, 806, 1602, 1060], [1324, 800, 1571, 1005], [1330, 806, 1613, 1044], [1336, 806, 1634, 1044],
  [1340, 772, 1581, 766], [1340, 777, 1581, 783], [1345, 760, 1602, 822], [1345, 763, 1622, 822], [1345, 766, 1622, 822],
  [1340, 787, 1540, 835], [1340, 789, 1540, 853], [1540, 836, 1581, 836], [1540, 853, 1581, 853], [1345, 750, 1368, 746],
  [1237, 676, 1263, 715], [1250, 676, 1265, 715], [1265, 680, 1268, 715], [1281, 676, 1300, 715], [1300, 690, 1305, 715], [1311, 676, 1311, 715],
  [1361, 688, 1334, 712], [1284, 720, 1284, 800], [1300, 720, 1330, 790], [1250, 800, 1195, 885], [1252, 795, 1215, 860], [1258, 800, 1257, 820],
];

function Board() {
  return (
    <g transform="translate(-69 -253)">
      <rect x="831" y="588" width="925" height="617" rx="51" fill="#64623e" stroke="#000" strokeWidth="6" />
      <rect x="831" y="588" width="925" height="617" rx="51" fill="none" stroke="#7d1a70" strokeWidth="3" />
      <rect x="837" y="594" width="913" height="605" rx="45" fill="url(#boardDots)" />

      <g fontSize="9" fontWeight="bold">
        <rect x="1565" y="748" width="192" height="125" fill="none" stroke="#8f8545" strokeWidth="3" />
        <path d="M1757 748v125" stroke="#94701c" strokeWidth="3" />
        <Usb x={927} first name="USB2" led="LED1" pads={["C8", "C9", "R10", "D2", "C10"]} />
        <Usb x={1126} name="USB3" led="LED2" pads={["C11", "C12", "R13", "D3", "C13"]} />
        <Usb x={1325} name="USB4" led="LED3" pads={["C14", "C15", "R14", "D4", "C16"]} />
        <Usb x={1525} name="USB5" led="LED4" pads={["C17", "C18", "R15", "D5", "C19"]} />

        {[1232, 1246, 1262, 1275, 1291, 1306, 1321].map((x, i) => (
          <g key={x}>
            <Chip x={x} y={662} w={11} h={19} v c="#8a6040" />
            <text x={x} y={657} fontSize="8" fill={GOLD}>{["R7", "R8", "R6", "C7", "R9", "R5", "R4"][i]}</text>
          </g>
        ))}
        <Chip x={1260} y={683} w={24} h={11} />
        <Chip x={1354} y={626} w={29} h={16} />
        <text x="1385" y="637" fill={GOLD}>C6</text>
        <rect x="1340" y="647" width="43" height="50" fill="none" stroke={GOLD} strokeWidth="1.500" />
        <rect x="1343" y="647" width="36" height="16" fill="#918535" />
        <rect x="1343" y="680" width="37" height="16" fill={ORANGE} />
        <text x="1387" y="680" fill={GOLD}>L1</text>
        <Chip x={1380} y={706} w={12} h={26} v />
        <text x="1393" y="721" fill={GOLD}>R11</text>
        <Chip x={1360} y={728} w={12} h={45} v c="#6f5f62" />
        <text x="1373" y="746" fill={GOLD}>R3</text>
        <text x="1346" y="718" fill={LEAF}>C20</text>
        <Chip x={1380} y={798} w={12} h={26} v />
        <text x="1394" y="816" fill={GOLD}>R16</text>
        <Chip x={1193} y={817} w={41} h={16} />
        <Chip x={1193} y={834} w={41} h={16} />
        <Chip x={1250} y={821} w={12} h={24} v />
        <text x="1208" y="862" fill={GOLD}>X1</text>
        <text x="1176" y="860" fill={GOLD}>R1</text>
        <text x="1252" y="854" fill={GOLD}>R2</text>
        <Chip x={1180} y={828} w={12} h={20} v />
        <rect x="1250" y="713" width="92" height="94" fill="none" stroke="#5f7040" strokeWidth="1" />
        <path d="M1258 717h72M1258 802h72" stroke="#755448" strokeWidth="6" strokeDasharray="2 2" />
        <path d="M1338 725v75" stroke="#684f5c" strokeWidth="8" strokeDasharray="2 2" />

        <Chip x={1508} y={653} w={14} h={30} v c="#646280" o={LEAF} />
        <rect x="1530" y="645" width="32" height="36" fill="none" stroke={LEAF} strokeWidth="1.500" />
        <rect x="1532" y="643" width="9" height="9" fill="#5e5ea8" />
        <rect x="1540" y="671" width="10" height="10" fill="#5e5ea8" />
        <Chip x={1533} y={688} w={30} h={16} c="#8a5070" o={LEAF} />
        <Chip x={1594} y={640} w={30} h={14} c="#646280" o={LEAF} />
        <Chip x={1594} y={659} w={30} h={14} c="#646280" o={LEAF} />
        <rect x="1604" y="677" width="53" height="40" fill="none" stroke={LEAF} strokeWidth="1.500" />
        <path d="M1614 677v40M1642 677v40M1618 688v20l22-20v20zM1614 698h28M1628 686v22" fill="none" stroke={LEAF} strokeWidth="1.500" />
        <rect x="1592" y="687" width="21" height="23" fill="#646280" />
        <rect x="1645" y="687" width="21" height="23" fill="#646280" />
        <text x="1508" y="649" fill={LEAF}>R14</text>
        <text x="1525" y="640" fill={LEAF}>U3</text>
        <text x="1515" y="697" fill={LEAF}>C21</text>
        <text x="1627" y="650" fill={LEAF}>C22</text>
        <text x="1627" y="670" fill={LEAF}>C4</text>
        <text x="1657" y="675" fill={LEAF}>D1</text>
        <Chip x={1532} y={830} w={25} h={11} />
        <Chip x={1532} y={848} w={25} h={11} />
        <text x="1540" y="828" fill={GOLD}>C5</text>
        <text x="1540" y="868" fill={GOLD}>C3</text>
        <text x="1580" y="887" fill={GOLD}>USB1</text>
      </g>

      {[[1581, 766], [1581, 783], [1602, 797], [1622, 797, 1], [1581, 809, 1], [1602, 822], [1622, 822], [1581, 836], [1581, 853]].map((p) => (
        <Pad key={`${p[0]}-${p[1]}`} x={p[0]} y={p[1]} dashed={p[2]} />
      ))}

      <rect x="1265" y="732" width="58" height="56" fill="#94593a" />
      <text transform="translate(1300 738) rotate(90)" fontSize="24" fill="#c9a48c">GND</text>
      <text transform="translate(1273 748) rotate(90)" fontSize="24" fill="#c9a48c">77</text>

      <g stroke={RAT} strokeWidth="2.500" fill="none" strokeOpacity=".88">
        {RATS.map((r, i) => <path key={i} d={`M${r[0]} ${r[1]}L${r[2]} ${r[3]}`} />)}
        <path d="M1602 797V648L1535 650M1515 676h22" strokeWidth="3" />
      </g>

      <Gnd x={1651} y={748} n="10" />
      <Gnd x={1651} y={872} n="11" />

      <g stroke={MAG} strokeWidth="3.500" fill="none" strokeLinejoin="round">
        <path d="M958 1140V1060H1158V1140M1158 1103H1357M1357 1060V1141H1556V1060" />
        <path d="M1555 675V695L1385 724L1367 742L1387 805L1359 1060" />
        <path d="M1339 723L1340 780L1331 810L1357 1060" />
      </g>

      <path d="M1235 667H1281M1251 667L1249 778L1260 807H1327L1339 780V727L1327 718L1312 697H1297L1290 715M1297 697V667H1312M1339 731H1352M1339 769H1352" fill="none" stroke="#22d8dc" strokeWidth="2.500" />
      <path d="M1361 634V655L1326 667L1327 716L1316 732H1299L1294 715L1286 732L1249 736V789L1318 787L1339 781V755L1327 747L1316 732M1327 716L1339 727M1249 724V736M1272 788L1273 806M1302 788L1306 806" fill="none" stroke="#f5e532" strokeWidth="2.500" />

      <Hole x={882} y={639} label="TP1" />
      <Hole x={1704} y={639} label="TP2" />
      <Hole x={882} y={1153} label="TP3" />
      <Hole x={1704} y={1153} label="TP4" />

      <path d="M1415 683v21l5-4 4 7 4-2-4-7h7z" fill="#28dc8c" stroke="#04140c" strokeWidth="1.500" />
      <text x="1630" y="1336" fontSize="11" fill="#555" fontFamily="Liberation Sans">AI</text>
    </g>
  );
}

function Canvas() {
  return (
    <svg className="block h-full w-full bg-black font-['DejaVu_Sans_Mono',monospace]">
      <defs>
        <pattern id="dots" width="13.333" height="13.333" patternUnits="userSpaceOnUse" x="1.500" y="4">
          <rect width="2" height="2" fill="#747474" />
        </pattern>
        <pattern id="boardDots" width="13.333" height="13.333" patternUnits="userSpaceOnUse" x="3.800" y="4.300">
          <rect width="2" height="2" fill="#a3a17e" />
        </pattern>
      </defs>
      <rect width="100%" height="100%" fill="url(#dots)" />
      <path d="M762 0V4000M0 952H4000" stroke="#c8c8c8" strokeWidth="2" />
      <Board />
    </svg>
  );
}

const LAYER_TABS = [
  ["顶层", "#ff2000"], ["内层1", "#969863"], ["内层2", "#3a4a2a"], ["底层", "#3a30ff"], ["顶层丝印层", "#ffc400"], ["底层丝印层", "#8f9c30"],
  ["顶层阻焊层", "#840f82"], ["底层阻焊层", "#b318ff"], ["顶层锡膏层", "#808080"], ["底层锡膏层", "#870c00"], ["顶层装配层", "#27b998"], ["底层装配层", "#545fff"],
  ["板框层", "#ff22ff"], ["多层", "#c0c0c0"], ["文档层", "#fff"], ["机械层", "#c030c0"], ["3D外壳边框层", "#c8ccc8"], ["3D外壳顶层", "#fff"], ["3D外壳底层", "#0060d0"],
];

function Center() {
  return (
    <div className={`flex min-w-0 flex-1 flex-col bg-[#dcdcdc] text-[16px] text-[#444] ${CJK}`}>
      <div className="flex h-[40px] shrink-0 border-b border-[#ccc]">
        <button className="flex w-[101px] items-center gap-[7px] border-r border-[#ccc] bg-[#efefef] pl-[11px]"><CloudLogo size={24} sw={2} />开始页</button>
        <button className="flex w-[214px] items-center gap-[8px] bg-[#e9e9e9] pl-[14px]">
          <Ic size={20} color="#4a9be0" sw={1.8}><path d="M4 1h11l6 6v16H4zM15 1v6h6" /></Ic>P1.Schematic1
        </button>
        <button className="flex w-[212px] items-center gap-[8px] bg-white pl-[12px] text-[#2a86e0]">
          <Ic size={22} color="#23923a" sw={2}><rect x="1.500" y="1.500" width="21" height="21" fill="#e2f5e2" /><path d="M2 8h9l3 5M2 18c2-6 6-6 9-4M17 15h5" /><circle cx="14" cy="15" r="3" /></Ic>
          <span><span className="text-[#444]">*</span>PCB1</span>
        </button>
      </div>
      <TopRuler />
      <div className="flex min-h-0 flex-1 bg-white">
        <LeftRuler />
        <div className="flex min-w-0 flex-1 flex-col">
          <div className="min-h-0 flex-1"><Canvas /></div>
          <div className="flex h-[20px] shrink-0 items-center overflow-hidden bg-[#1c1c1e] pl-[10px] text-white">
            <button aria-label="上一个" className="mr-[16px]"><svg width="6" height="10"><path d="M6 0v10L0 5z" fill="#fff" /></svg></button>
            <button aria-label="下一个" className="mr-[20px]"><svg width="6" height="10"><path d="M0 0v10l6-5z" fill="#fff" /></svg></button>
            {LAYER_TABS.map(([t, c], i) => (
              <button key={t} className={`mr-[20px] flex shrink-0 items-center gap-[7px] whitespace-nowrap leading-[20px] ${i === 1 ? "font-bold" : "text-[#c4c4c4]"}`}>
                <span className="h-[11px] w-[11px] border border-[#888]" style={{ background: c }} />{t}
              </button>
            ))}
          </div>
        </div>
      </div>
    </div>
  );
}

function BottomPanel() {
  return (
    <div className={`flex h-[45px] shrink-0 items-center border-b-2 border-[#444] bg-[#f4f4f4] pb-[6px] text-[17px] text-[#444] ${CJK}`}>
      <span className="flex w-[46px] justify-center"><Pin /></span>
      <button className="h-[34px] w-[93px] border-r border-[#ccc] bg-white text-[#2a86e0]">库</button>
      <button className="flex h-[34px] w-[96px] items-center justify-center gap-[2px] border-r border-[#ccc]"><span className="h-[16px] w-[16px] rounded-full bg-[#f22]" />日志</button>
      <button className="h-[34px] w-[94px] border-r border-[#ccc]">DRC</button>
      <button className="h-[34px] w-[114px] border-r border-[#ccc]">查找结果</button>
    </div>
  );
}

/* ---------- video overlays ---------- */

const CHAPTER = "absolute whitespace-nowrap font-['Noto_Sans_CJK_SC',sans-serif] text-[73px] font-black leading-none text-white [-webkit-text-stroke:12px_black] [paint-order:stroke_fill]";

function Overlays() {
  return (
    <div className="pointer-events-none absolute inset-0 overflow-hidden">
      <div className="absolute left-[66px] top-[74px] whitespace-nowrap font-['Noto_Sans_CJK_SC',sans-serif] text-[52px] leading-[56px] text-white/70">立创EDA</div>
      <svg className="absolute left-[284px] top-[48px]" width="192" height="80" viewBox="0 0 192 80" fill="none" stroke="#fff" strokeOpacity=".75" strokeWidth="8" strokeLinejoin="round">
        <path d="M8 4l9 70c16 0 29-8 29-15s-12-9-31-9" />
        <path d="M56 38l6 36M54 24l1 7M69 8l9 66M86 38l4 36M84 24l1 7" strokeWidth="7" />
        <path d="M112 4l9 70c16 0 29-8 29-15s-12-9-31-9" />
        <path d="M158 38l5 36M156 24l1 7M169 12l8 62M184 38l3 36M182 24l1 7" strokeWidth="7" />
      </svg>
      <svg className="absolute bottom-[163px] right-[52px] drop-shadow-md" width="92" height="84" viewBox="0 0 92 84">
        <path d="M27 6l12 13M65 6 53 19" stroke="#ddd" strokeWidth="10" strokeLinecap="round" />
        <path d="M27 6l12 13M65 6 53 19" stroke="#fff" strokeWidth="8" strokeLinecap="round" />
        <rect x="5" y="14" width="81" height="65" rx="15" fill="#fff" fillOpacity=".9" stroke="#ddd" />
        <path d="M35 34q0-4 4-2l21 11q3 3 0 5L39 60q-4 2-4-2z" fill="#fff" stroke="#aaa" strokeWidth="2" />
      </svg>
      <div className="absolute inset-x-0 bottom-0 flex h-[84px]">
        <div className="w-[69%] bg-[#f48daf]/75" />
        <div className="flex-1 bg-white/55" />
      </div>
      <div className={`${CHAPTER} bottom-[12px] left-[655px]`}>PCB布局</div>
      <div className="absolute bottom-[10px] left-[1637px] h-[66px] w-[23px] rounded-[7px] border-[6px] border-black bg-white" />
      <div className={`${CHAPTER} bottom-[12px] left-[1912px]`}>设计规则设置</div>
      <div className="absolute bottom-[26px] left-[36%] flex h-[58px] w-[722px] items-center bg-black/40 pl-[12px]">
        <span className="whitespace-nowrap pb-[40px] font-['Noto_Sans_CJK_SC',sans-serif] text-[63px] font-medium leading-none text-white">这里会有内存一和内存二</span>
      </div>
    </div>
  );
}

export default function App() {
  return (
    <div className="relative flex h-screen flex-col overflow-hidden bg-white">
      <BrowserTabs />
      <AddressBar />
      <MenuBar />
      <Toolbar />
      <div className="flex min-h-0 flex-1">
        <LeftDock />
        <VGutter arrow="M0 0v10l6-5z" />
        <Center />
        <VGutter arrow="M0 0v10l6-5z" />
        <RightDock />
      </div>
      <div className="h-[7px] shrink-0 bg-[#e2e2e2]" />
      <BottomPanel />
      <Overlays />
    </div>
  );
}
